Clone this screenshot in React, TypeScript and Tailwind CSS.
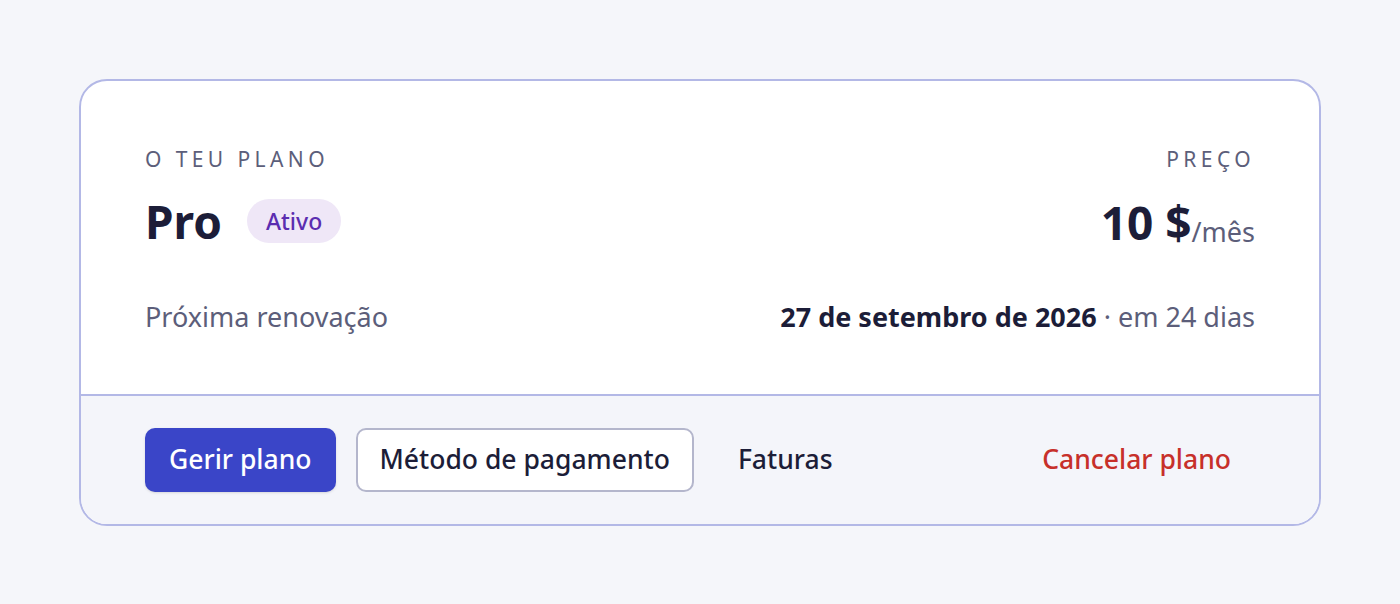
export default function App() {
  return (
    <div
      className="min-h-screen bg-[#f5f6fa] px-[79px] py-[79px]"
      style={{ fontFamily: '"Noto Sans", "Open Sans", sans-serif' }}
    >
      <div className="overflow-hidden rounded-[28px] border-2 border-[#b3b8e6] bg-white">
        <div className="px-16 pb-[59px] pt-[64px]">
          <div className="flex items-start justify-between">
            <div>
              <div className="text-[21px] leading-7 uppercase tracking-[0.21em] text-[#5c5e7a]">O teu plano</div>
              <div className="mt-[24px] flex h-12 items-center gap-[25px]">
                <span className="text-[46px] font-bold leading-none text-[#1c1d38]">Pro</span>
                <span className="flex h-11 items-center rounded-full bg-[#efe7f7] px-[19px] text-[23px] font-medium text-[#5b2db0]">
                  Ativo
                </span>
              </div>
            </div>
            <div className="text-right">
              <div className="text-[21px] leading-7 uppercase tracking-[0.21em] text-[#5c5e7a]">Preço</div>
              <div className="mt-[24px] flex h-12 items-end justify-end">
                <span className="text-[46px] font-bold leading-none text-[#1c1d38]">10 $</span>
                <span className="text-[27px] leading-none text-[#5c5e7a]">/mês</span>
              </div>
            </div>
          </div>
          <div className="mt-[54px] flex h-9 items-center justify-between text-[27px]">
            <span className="text-[#5c5e7a]">Próxima renovação</span>
            <span className="text-[#5c5e7a]">
              <span className="font-bold text-[#1c1d38]">27 de setembro de 2026</span> · em 24 dias
            </span>
          </div>
        </div>
        <div className="flex items-center gap-5 border-t-2 border-[#b3b8e6] bg-[#f4f5fa] px-16 py-8 text-[26.5px] font-medium">
          <button className="h-16 rounded-[10px] bg-[#3a45c8] px-6 text-white shadow-sm">Gerir plano</button>
          <button className="h-16 rounded-[10px] border-2 border-[#b4b6cc] bg-white px-[22px] text-[#1c1d38]">
            Método de pagamento
          </button>
          <button className="h-16 px-6 text-[#1c1d38]">Faturas</button>
          <button className="ml-auto h-16 px-6 text-[#c7302a]">Cancelar plano</button>
        </div>
      </div>
    </div>
  );
}
